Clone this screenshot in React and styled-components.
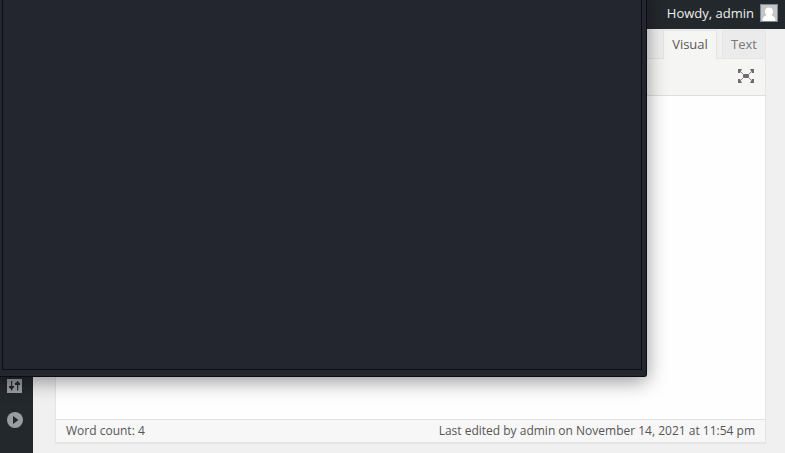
import React from "react";
import styled, { createGlobalStyle } from "styled-components";

const Global = createGlobalStyle`
  * { box-sizing: border-box; }
  body { margin: 0; overflow: hidden; background: #f0f0f0; font-family: "Open Sans", sans-serif; font-size: 13px; }
`;
const Page = styled.div`
  position: relative;
  width: 785px;
  height: 453px;
  display: flex;
  flex-direction: column;
  overflow: hidden;
`;
const AdminBar = styled.header`
  height: 29px;
  flex: none;
  background: #23282d;
  color: #eee;
  display: flex;
  justify-content: flex-end;
  align-items: flex-start;
  gap: 6px;
  padding: 0 7px 0 0;
  line-height: 26px;
`;
const Avatar = styled.svg`
  width: 18px;
  height: 18px;
  margin-top: 4px;
  display: block;
`;
const Body = styled.div`
  flex: 1;
  display: flex;
  min-height: 0;
`;
const Sidebar = styled.nav`
  width: 33px;
  flex: none;
  background: #23282d;
  display: flex;
  flex-direction: column;
  justify-content: flex-end;
  gap: 16px;
  padding: 0 0 24px 6px;
`;
const MenuIcon = styled.svg`
  width: 18px;
  height: 18px;
  display: block;
`;
const Content = styled.main`
  flex: 1;
  padding: 1px 19px 0 22px;
`;
const Tabs = styled.div`
  display: flex;
  justify-content: flex-end;
  gap: 5px;
  height: 28px;
`;
const Tab = styled.button`
  width: ${(p) => p.$width}px;
  height: ${(p) => (p.$active ? 29 : 28)}px;
  display: flex;
  justify-content: center;
  align-items: flex-start;
  padding: 0;
  border: 1px solid #e5e5e5;
  border-bottom: 0;
  background: ${(p) => (p.$active ? "#f5f5f3" : "#ebebeb")};
  color: ${(p) => (p.$active ? "#555" : "#777")};
  font: 13px/26px "Open Sans", sans-serif;
  z-index: 1;
`;
const Editor = styled.section`
  height: 385px;
  border: 1px solid #e5e5e5;
  background: #fff;
  display: flex;
  flex-direction: column;
  box-shadow: 0 1px 1px rgba(0, 0, 0, 0.04);
`;
const Toolbar = styled.div`
  height: 37px;
  background: #f5f5f3;
  border-bottom: 1px solid #dedede;
  display: flex;
  justify-content: flex-end;
  padding: 8px 10px 0 0;
`;
const ExpandIcon = styled.svg`
  width: 18px;
  height: 18px;
`;
const Writing = styled.div`
  flex: 1;
  background: #fefefe;
`;
const Status = styled.footer`
  height: 23px;
  border-top: 1px solid #e2e2e2;
  background: #f7f7f7;
  color: #555;
  display: flex;
  justify-content: space-between;
  padding: 0 10px;
  font-size: 12px;
  line-height: 22px;
`;
const Window = styled.div`
  position: absolute;
  z-index: 2;
  left: -10px;
  top: -10px;
  width: 657px;
  height: 387px;
  padding: 0 4px 6px 12px;
  background: #23262e;
  border: solid #0b0d15;
  border-width: 0 1px 1px 0;
  border-radius: 0 0 3px 0;
  box-shadow: 0 4px 20px rgba(0, 0, 0, 0.42);
`;
const WindowPane = styled.div`
  height: 100%;
  border: 1px solid #0b0d15;
`;

export default function App() {
  return (
    <Page>
      <Global />
      <AdminBar>
        <span>Howdy, admin</span>
        <Avatar viewBox="0 0 18 18">
          <path fill="#7a8999" d="M0 0h18v18H0z" />
          <path fill="#c5c5c5" d="M1 1h16v16H1z" />
          <path fill="#fff" d="M9 3.500c2.500 0 4 1.600 4 4 0 1.700-.7 2.700-1.500 3.300.3 1.300 3.400 1.600 3.800 4.200v2H2.700v-2c.4-2.600 3.500-2.900 3.800-4.200C5.700 10.200 5 9.200 5 7.500c0-2.400 1.500-4 4-4z" />
        </Avatar>
      </AdminBar>
      <Body>
        <Sidebar>
          <MenuIcon viewBox="0 0 18 18">
            <path fill="#999da1" d="M1 2h15v14H1z" />
            <path fill="#23282d" d="M5 4h1.200v5H8v1.500L6.200 12v1.500H5V12l-2-1.500V9h2zM11 4h1.200v1l1.800 1v2h-1.800v5.500H11V8H9V6l2-1z" />
          </MenuIcon>
          <MenuIcon viewBox="0 0 18 18">
            <circle cx="9" cy="9" r="8" fill="#999da1" />
            <path fill="#23282d" d="M7 5l5.500 4L7 13z" />
          </MenuIcon>
        </Sidebar>
        <Content>
          <Tabs>
            <Tab $active $width={54}>Visual</Tab>
            <Tab $width={44}>Text</Tab>
          </Tabs>
          <Editor>
            <Toolbar>
              <ExpandIcon viewBox="0 0 18 18">
                <path fill="#716a70" d="M6 7h6v4H6zM1 2h4L3 6H1zM17 2h-4l2 4h2zM1 16h4l-2-4H1zM17 16h-4l2-4h2z" />
                <path stroke="#8b868b" strokeWidth="1" d="M3 4l4 4M15 4l-4 4M3 14l4-4M15 14l-4-4" />
              </ExpandIcon>
            </Toolbar>
            <Writing />
            <Status>
              <span>Word count: 4</span>
              <span>Last edited by admin on November 14, 2021 at 11:54 pm</span>
            </Status>
          </Editor>
        </Content>
      </Body>
      <Window>
        <WindowPane />
      </Window>
    </Page>
  );
}
